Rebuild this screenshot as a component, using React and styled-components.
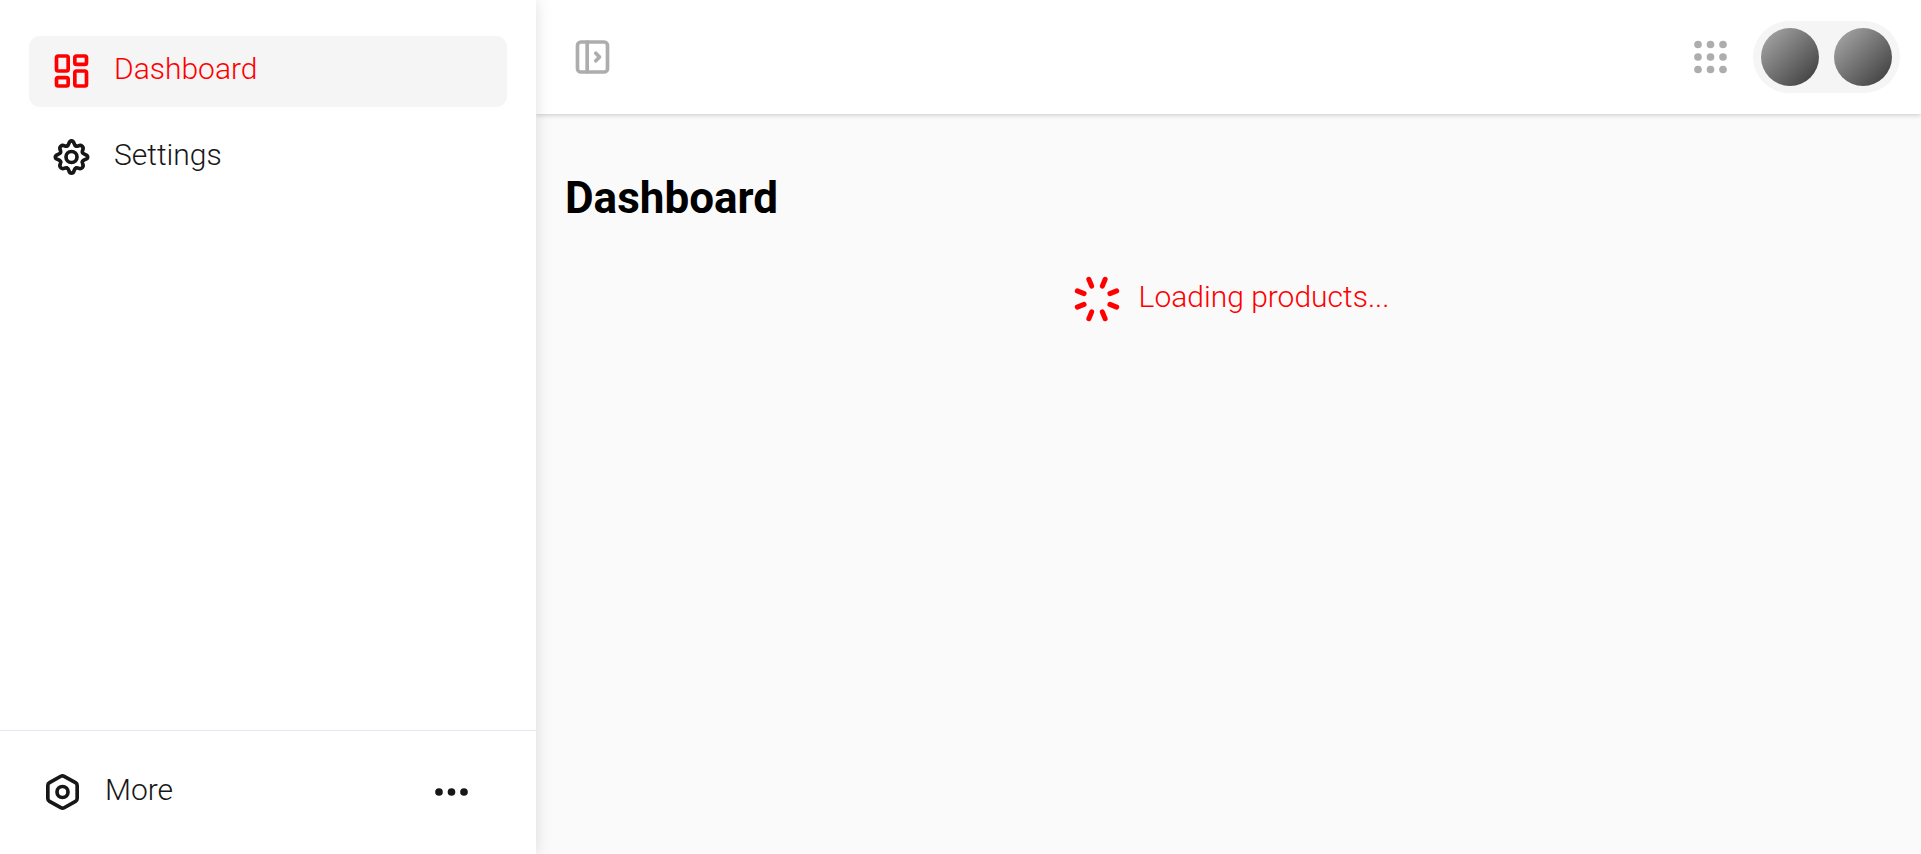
import React from 'react';
import styled, { createGlobalStyle } from 'styled-components';

const GlobalStyle = createGlobalStyle`
  *, *::before, *::after { box-sizing: border-box; }
  body {
    margin: 0;
    background: #fafafa;
    color: #171717;
    font-family: Bahnschrift, Roboto, "Liberation Sans", sans-serif;
    font-size: 30px;
    font-weight: 300;
    line-height: 36px;
  }
`;

const Shell = styled.div`
  display: grid;
  grid-template-columns: minmax(280px, 536px) 1fr;
  min-height: 100vh;
`;

const Sidebar = styled.aside`
  display: flex;
  flex-direction: column;
  background: #fff;
  box-shadow: 0 0 15px rgba(0, 0, 0, 0.13);
  z-index: 2;
`;

const Nav = styled.nav`
  flex: 1;
  display: flex;
  flex-direction: column;
  gap: 15px;
  padding: 36px 29px;
`;

const NavLink = styled.a`
  display: flex;
  align-items: center;
  gap: 22px;
  padding: 15px 22px 16px;
  border-radius: 11px;
  text-decoration: none;
  color: ${(p) => (p.$active ? '#ff0000' : '#171717')};
  background: ${(p) => (p.$active ? '#f5f5f5' : 'transparent')};
`;

const Label = styled.span`
  padding-bottom: 4px;
`;

const SidebarFooter = styled.div`
  border-top: 1px solid #e2e8f0;
  padding: 41px 64px 42px 42px;
`;

const MoreButton = styled.button`
  display: flex;
  align-items: center;
  gap: 22px;
  width: 100%;
  padding: 0;
  border: 0;
  background: none;
  color: inherit;
  font: inherit;
  text-align: left;
  cursor: pointer;

  ${Label} { flex: 1; }
`;

const Icon = styled.svg.attrs({
  viewBox: '0 0 24 24',
  fill: 'none',
  stroke: 'currentColor',
  strokeWidth: 2.2,
  strokeLinecap: 'round',
  strokeLinejoin: 'round',
  'aria-hidden': true,
})`
  display: block;
  flex: none;
  width: 41px;
  height: 40px;
`;

const Page = styled.div`
  display: flex;
  flex-direction: column;
  min-width: 0;
`;

const TopBar = styled.header`
  display: flex;
  align-items: center;
  justify-content: space-between;
  height: 114px;
  padding: 0 21px 0 36px;
  background: #fff;
  box-shadow: 0 1px 5px rgba(0, 0, 0, 0.2);
`;

const Tools = styled.div`
  display: flex;
  align-items: center;
  gap: 22px;
`;

const IconButton = styled.button`
  padding: 0;
  border: 0;
  background: none;
  color: #adadad;
  cursor: pointer;
`;

const AvatarGroup = styled.div`
  display: flex;
  gap: 15px;
  padding: 7px 8px;
  border-radius: 36px;
  background: #f5f5f5;
`;

const Avatar = styled.button`
  width: 58px;
  height: 58px;
  padding: 0;
  border: 0;
  border-radius: 50%;
  background: linear-gradient(135deg, #adadad, #373737);
  cursor: pointer;
`;

const Content = styled.main`
  padding: 57px 24px 57px 29px;
`;

const Title = styled.h1`
  margin: 0;
  color: #000;
  font-size: 44px;
  font-weight: 700;
  line-height: 54px;
`;

const Loading = styled.div`
  display: flex;
  align-items: center;
  justify-content: center;
  gap: 18px;
  margin-top: 50px;
  color: #ff0000;
`;

const Spinner = styled.svg`
  display: block;
  flex: none;
  width: 48px;
  height: 48px;
`;

const DashboardIcon = () => (
  <Icon>
    <rect x="3" y="3" width="7" height="9" rx="1" />
    <rect x="14" y="3" width="7" height="5" rx="1" />
    <rect x="14" y="12" width="7" height="9" rx="1" />
    <rect x="3" y="16" width="7" height="5" rx="1" />
  </Icon>
);

const TALL_TOOTH = 'M9.3 5.4C10.9 4.9 10 2.3 12 2.3S13.1 4.9 14.7 5.4';
const WIDE_TOOTH = 'M9.3 5.4C10.6 5.1 9.7 2.9 12 2.9S13.4 5.1 14.7 5.4';

const GearIcon = () => (
  <Icon>
    {[0, 90, 180, 270].map((a) => (
      <g key={a} transform={`rotate(${a} 12 12)`}>
        <path d={TALL_TOOTH} />
        <path d={WIDE_TOOTH} transform="rotate(45 12 12)" />
      </g>
    ))}
    <circle cx="12" cy="12" r="3.3" />
  </Icon>
);

const HexIcon = () => (
  <Icon>
    <path d="M20.8 15.9V8.1a2 2 0 0 0-1-1.73l-6.8-3.8a2 2 0 0 0-2 0l-6.8 3.8a2 2 0 0 0-1 1.73v7.8a2 2 0 0 0 1 1.73l6.8 3.8a2 2 0 0 0 2 0l6.8-3.8a2 2 0 0 0 1-1.73Z" />
    <circle cx="12" cy="12" r="3.3" />
  </Icon>
);

const PanelIcon = () => (
  <Icon>
    <rect x="3" y="3" width="18" height="18" rx="2" />
    <path d="M8.8 3v18M14 9.7l2.2 2.3-2.2 2.3" />
  </Icon>
);

const DOTS = [4.5, 12, 19.5];

const Dots = ({ rows }) => (
  <Icon>
    {rows.map((y) =>
      DOTS.map((x) => (
        <circle key={`${x}-${y}`} cx={x} cy={y} r="2.3" fill="currentColor" stroke="none" />
      ))
    )}
  </Icon>
);

const Petals = () => (
  <Spinner viewBox="-24 -24 48 48" stroke="currentColor" strokeWidth="5" strokeLinecap="round" aria-hidden="true">
    {[0, 1, 2, 3, 4, 5, 6, 7].map((i) => (
      <path key={i} d="M0-21.3V-14" transform={`rotate(${22.5 + i * 45})`} />
    ))}
  </Spinner>
);

export default function App() {
  return (
    <>
      <GlobalStyle />
      <Shell>
        <Sidebar>
          <Nav aria-label="Main">
            <NavLink href="#dashboard" $active aria-current="page">
              <DashboardIcon />
              <Label>Dashboard</Label>
            </NavLink>
            <NavLink href="#settings">
              <GearIcon />
              <Label>Settings</Label>
            </NavLink>
          </Nav>
          <SidebarFooter>
            <MoreButton type="button">
              <HexIcon />
              <Label>More</Label>
              <Dots rows={[12]} />
            </MoreButton>
          </SidebarFooter>
        </Sidebar>
        <Page>
          <TopBar>
            <IconButton type="button" aria-label="Toggle sidebar">
              <PanelIcon />
            </IconButton>
            <Tools>
              <IconButton type="button" aria-label="Apps">
                <Dots rows={DOTS} />
              </IconButton>
              <AvatarGroup>
                <Avatar type="button" aria-label="Team" />
                <Avatar type="button" aria-label="Account" />
              </AvatarGroup>
            </Tools>
          </TopBar>
          <Content>
            <Title>Dashboard</Title>
            <Loading role="status">
              <Petals />
              <Label>Loading products...</Label>
            </Loading>
          </Content>
        </Page>
      </Shell>
    </>
  );
}
